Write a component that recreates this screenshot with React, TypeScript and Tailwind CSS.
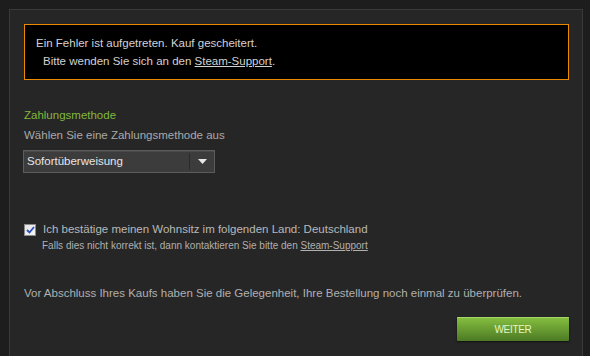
import { useState } from 'react';

const font = { fontFamily: '"Liberation Sans", Arial, sans-serif' };

export default function App() {
  const [confirmed, setConfirmed] = useState(true);

  return (
    <div className="flex h-[356px] flex-col bg-[#1d1d1d] pt-[9px] pl-[9px] pr-[7px] overflow-hidden" style={font}>
      <div className="flex-1 border border-b-0 border-[#3a3a3a] bg-[#262626] pt-[14px] pl-[14px] pr-[13px]">
        {/* Error box */}
        <div className="border border-[#e98a00] bg-black pt-[9px] pb-[9px] pl-[11px] text-[11.5px] leading-[18px] text-[#d2d2d2]">
          <p>Ein Fehler ist aufgetreten. Kauf gescheitert.</p>
          <p className="pl-[7px]">
            Bitte wenden Sie sich an den <a className="underline text-[#d2d2d2]">Steam-Support</a>.
          </p>
        </div>

        {/* Payment method */}
        <h2 className="mt-[26px] text-[11.5px] leading-[18px] text-[#82b83c]">Zahlungsmethode</h2>
        <p className="mt-[2px] text-[11.5px] leading-[18px] text-[#a9a9a9]">Wählen Sie eine Zahlungsmethode aus</p>
        <div className="mt-[6px] flex h-[23px] w-[192px] -ml-[1px] items-stretch border border-[#5c5c5c] bg-[#3c3c3c] shadow-[inset_0_1px_0_#4a4a4a]">
          <span className="flex flex-1 items-center pl-[3px] text-[11.5px] text-[#e6e6e6]">Sofortüberweisung</span>
          <span className="my-[2px] w-px bg-[#2a2a2a]" />
          <span className="flex w-[24px] items-center justify-center">
            <svg width="9" height="5" viewBox="0 0 9 5">
              <path d="M0 0 H9 L4.5 5 Z" fill="#e8e8e8" />
            </svg>
          </span>
        </div>

        {/* Residence */}
        <div className="mt-[48px] flex h-[18px] items-center gap-[7px]">
          <button
            onClick={() => setConfirmed(c => !c)}
            className="flex h-[12px] w-[12px] items-center justify-center border border-[#8a8a8a] bg-gradient-to-br from-[#e2e2e2] to-[#f6f6f6]"
          >
            {confirmed && (
              <svg width="9" height="8" viewBox="0 0 9 8">
                <path d="M1 4 L3.5 6.5 L8 1" stroke="#2a4fc0" strokeWidth="1.8" fill="none" />
              </svg>
            )}
          </button>
          <span className="text-[11.5px] text-[#b8b8b8]">Ich bestätige meinen Wohnsitz im folgenden Land: Deutschland</span>
        </div>
        <p className="pl-[18px] text-[10px] leading-[14px] text-[#b0b0b0]">
          Falls dies nicht korrekt ist, dann kontaktieren Sie bitte den <a className="underline">Steam-Support</a>
        </p>

        <p className="mt-[31px] text-[11.5px] leading-[18px] text-[#b0b0b0]">
          Vor Abschluss Ihres Kaufs haben Sie die Gelegenheit, Ihre Bestellung noch einmal zu überprüfen.
        </p>

        <div className="mt-[15px] flex justify-end">
          <button className="h-[24px] w-[112px] rounded-[1px] bg-gradient-to-b from-[#86c140] to-[#4d7a24] text-[10px] tracking-[-0.3px] text-[#e4f6c4] shadow-[inset_0_1px_0_#a6d66a,0_1px_2px_#111]">
            WEITER
          </button>
        </div>
      </div>
    </div>
  );
}
